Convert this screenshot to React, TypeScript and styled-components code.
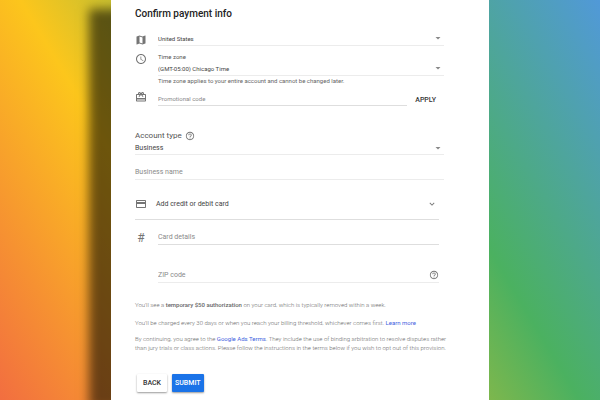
import React from "react";
import styled, { createGlobalStyle } from "styled-components";
import {
  MdMap,
  MdSchedule,
  MdCardGiftcard,
  MdCreditCard,
  MdHelpOutline,
  MdArrowDropDown,
  MdExpandMore,
} from "react-icons/md";

const GlobalStyle = createGlobalStyle`
  *, *::before, *::after { box-sizing: border-box; }
  body {
    margin: 0;
    font-family: Roboto, "Liberation Sans", sans-serif;
    color: #555;
  }
  button, input, select { font-family: inherit; }
`;

const Page = styled.div`
  display: flex;
  justify-content: center;
  min-height: 100vh;
  overflow: hidden;
  background: linear-gradient(59deg, #f26e40 0%, #fcc61c 31%, #4bb160 69%, #5199d8 100%);
`;

const Panel = styled.main`
  width: 63%;
  padding: 7px 36px 8px 24px;
  background: #fff;
  box-shadow: -22px 9px 10px rgba(0, 0, 0, 0.57);
`;

const Form = styled.section`
  margin-right: 9px;
`;

const Title = styled.h1`
  margin: 0 0 10px;
  font-size: 10px;
  line-height: 14px;
  font-weight: 500;
  color: #222;
`;

const Row = styled.div<{ $gap?: number }>`
  display: grid;
  grid-template-columns: 12px minmax(0, 1fr);
  column-gap: 11px;
  align-items: start;
  margin-bottom: ${(p) => p.$gap ?? 0}px;
`;

const IconCell = styled.span<{ $top?: number }>`
  display: flex;
  justify-content: center;
  padding-top: ${(p) => p.$top ?? 0}px;
  color: #757575;
  font-size: 12px;
  line-height: 12px;
`;

const Line = styled.div<{ $height?: number; $color?: string }>`
  display: flex;
  align-items: center;
  height: ${(p) => p.$height ?? 15}px;
  border-bottom: 1px solid ${(p) => p.$color ?? "#ececec"};
  color: #888;
`;

const Select = styled.select<{ $size?: number }>`
  appearance: none;
  flex: 1;
  min-width: 0;
  height: 12px;
  padding: 0;
  border: 0;
  outline: 0;
  background: transparent;
  font-size: ${(p) => p.$size ?? 6}px;
  color: #444;
`;

const Input = styled.input<{ $size?: number }>`
  flex: 1;
  min-width: 0;
  height: 12px;
  padding: 0;
  border: 0;
  outline: 0;
  background: transparent;
  font-size: ${(p) => p.$size ?? 7}px;
  color: #444;
  &::placeholder {
    color: #8a8a8a;
    opacity: 1;
  }
`;

const Arrow = styled(MdArrowDropDown)`
  width: 12px;
  height: 12px;
  color: #888;
  pointer-events: none;
`;

const Label = styled.label<{ $size?: number }>`
  display: block;
  font-size: ${(p) => p.$size ?? 6}px;
  line-height: 8px;
  color: #555;
`;

const Hint = styled.p`
  margin: 0;
  font-size: 6px;
  line-height: 10px;
  color: #666;
`;

const Promo = styled.div`
  display: flex;
  align-items: flex-end;
  gap: 8px;
  & > :first-child { flex: 1; }
`;

const TextButton = styled.button`
  padding: 0;
  margin-right: 8px;
  border: 0;
  background: transparent;
  font-size: 7px;
  line-height: 12px;
  font-weight: 500;
  color: #333;
`;

const AccountHead = styled.div`
  display: flex;
  align-items: center;
  gap: 3px;
  height: 12px;
  color: #666;
`;

const HelpButton = styled.button`
  display: flex;
  padding: 0;
  border: 0;
  background: transparent;
  color: #757575;
  font-size: 10px;
`;

const FieldBlock = styled.div`
  padding-top: 10px;
`;

const Payment = styled.section`
  margin-right: 5px;
  margin-top: 17px;
`;

const Method = styled.button`
  display: flex;
  align-items: center;
  gap: 9px;
  width: 100%;
  height: 23px;
  margin-bottom: 10px;
  padding: 0 2px 8px 0;
  border: 0;
  border-bottom: 1px solid #dedede;
  background: transparent;
  font-size: 7px;
  color: #444;
  text-align: left;
  svg { color: #757575; }
`;

const MethodName = styled.span`
  flex: 1;
`;

const Legal = styled.p<{ $gap?: number }>`
  margin: 0 0 ${(p) => p.$gap ?? 0}px;
  font-size: 6px;
  line-height: 9px;
  font-weight: 300;
  color: #6c6c6c;
  b { font-weight: 500; color: #666; }
`;

const Link = styled.a`
  font-weight: 400;
  color: #3f62e0;
  text-decoration: none;
`;

const Actions = styled.div`
  display: flex;
  gap: 5px;
  padding-left: 2px;
`;

const Button = styled.button<{ $primary?: boolean }>`
  height: 18px;
  padding: 0 ${(p) => (p.$primary ? 3 : 6)}px;
  border: 0;
  border-radius: 1px;
  background: ${(p) => (p.$primary ? "#1a73e8" : "#fff")};
  color: ${(p) => (p.$primary ? "#fff" : "#333")};
  box-shadow: 0 1px 2px rgba(0, 0, 0, 0.4);
  font-size: 7px;
  font-weight: 500;
`;

export default function App() {
  return (
    <>
      <GlobalStyle />
      <Page>
        <Panel>
          <Title>Confirm payment info</Title>

          <Form>
            <Row $gap={7}>
              <IconCell $top={3}><MdMap /></IconCell>
              <Line>
                <Select aria-label="Country"><option>United States</option></Select>
                <Arrow />
              </Line>
            </Row>

            <Row $gap={5}>
              <IconCell><MdSchedule /></IconCell>
              <div>
                <Label htmlFor="timezone">Time zone</Label>
                <Line>
                  <Select id="timezone"><option>(GMT-05:00) Chicago Time</option></Select>
                  <Arrow />
                </Line>
                <Hint>Time zone applies to your entire account and cannot be changed later.</Hint>
              </div>
            </Row>

            <Row $gap={24}>
              <IconCell><MdCardGiftcard /></IconCell>
              <Promo>
                <Line $color="#dedede">
                  <Input $size={6} aria-label="Promotional code" placeholder="Promotional code" />
                </Line>
                <TextButton type="button">APPLY</TextButton>
              </Promo>
            </Row>

            <AccountHead>
              <Label $size={8} htmlFor="account">Account type</Label>
              <HelpButton type="button" aria-label="About account types"><MdHelpOutline /></HelpButton>
            </AccountHead>
            <Line $height={13}>
              <Select id="account" $size={7}><option>Business</option></Select>
              <Arrow />
            </Line>
            <FieldBlock>
              <Line>
                <Input aria-label="Business name" placeholder="Business name" />
              </Line>
            </FieldBlock>

            <Payment>
              <Method type="button">
                <MdCreditCard size={12} />
                <MethodName>Add credit or debit card</MethodName>
                <MdExpandMore size={10} />
              </Method>
              <Row $gap={23}>
                <IconCell $top={2}>#</IconCell>
                <Line $color="#dedede">
                  <Input aria-label="Card details" placeholder="Card details" />
                </Line>
              </Row>
              <Row $gap={17}>
                <IconCell />
                <Line>
                  <Input aria-label="ZIP code" placeholder="ZIP code" />
                  <HelpButton type="button" aria-label="About ZIP code"><MdHelpOutline /></HelpButton>
                </Line>
              </Row>
            </Payment>
          </Form>

          <Legal $gap={9}>
            You'll see a <b>temporary $50 authorization</b> on your card, which is typically removed within a week.
          </Legal>
          <Legal $gap={7}>
            You'll be charged every 30 days or when you reach your billing threshold, whichever comes first. <Link href="#">Learn more</Link>
          </Legal>
          <Legal $gap={22}>
            By continuing, you agree to the <Link href="#">Google Ads Terms</Link>. They include the use of binding arbitration to resolve disputes rather than jury trials or class actions. Please follow the instructions in the terms below if you wish to opt out of this provision.
          </Legal>

          <Actions>
            <Button type="button">BACK</Button>
            <Button type="submit" $primary>SUBMIT</Button>
          </Actions>
        </Panel>
      </Page>
    </>
  );
}
